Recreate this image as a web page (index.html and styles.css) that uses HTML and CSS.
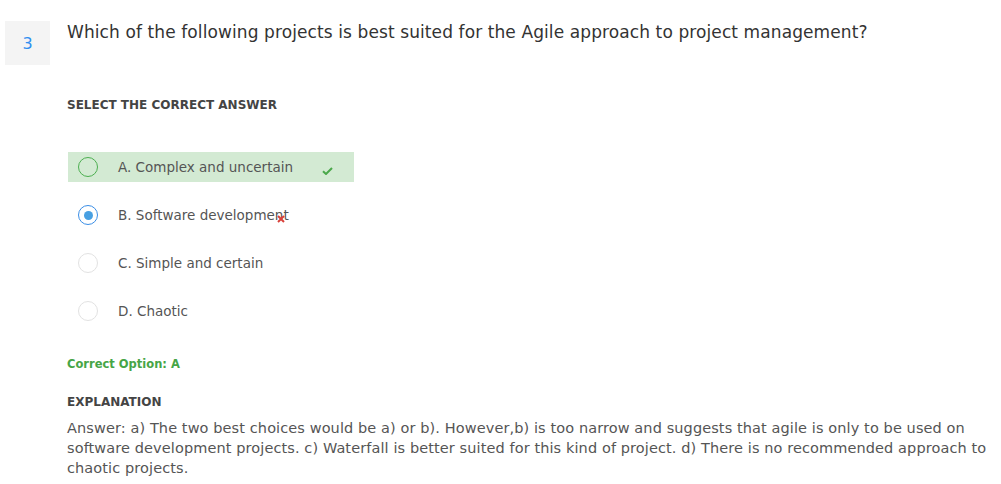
FILE: index.html
```html
<!DOCTYPE html>
<html>
<head>
<meta charset="utf-8">
<link rel="stylesheet" href="styles.css">
</head>
<body>
<div class="question">
  <div class="qnum">3</div>
  <div class="qbody">
    <div class="qtext">Which of the following projects is best suited for the Agile approach to project management?</div>
    <div class="label select">SELECT THE CORRECT ANSWER</div>
    <div class="options">
      <div class="option correct">
        <span class="radio radio-green"></span>
        <span class="otext">A. Complex and uncertain</span>
        <svg class="mark check" width="11" height="8" viewBox="0 0 11 8"><path d="M1 4.2 L4 7 L10 1" fill="none" stroke="#4aa84a" stroke-width="2"/></svg>
      </div>
      <div class="option">
        <span class="radio radio-blue"><span class="dot"></span></span>
        <span class="otext">B. Software development</span>
        <svg class="mark cross" width="8" height="8" viewBox="0 0 8 8"><path d="M1 1 L7 7 M7 1 L1 7" fill="none" stroke="#d9413a" stroke-width="2"/></svg>
      </div>
      <div class="option">
        <span class="radio"></span>
        <span class="otext">C. Simple and certain</span>
      </div>
      <div class="option">
        <span class="radio"></span>
        <span class="otext">D. Chaotic</span>
      </div>
    </div>
    <div class="correct-opt">Correct Option: A</div>
    <div class="label expl">EXPLANATION</div>
    <p class="explain">Answer: a) The two best choices would be a) or b). However,b) is too narrow and suggests that agile is only to be used on software development projects. c) Waterfall is better suited for this kind of project. d) There is no recommended approach to chaotic projects.</p>
  </div>
</div>
</body>
</html>
```

FILE: styles.css
```css
html, body {
  margin: 0;
  padding: 0;
  background: #fff;
}
body {
  font-family: "DejaVu Sans", "Liberation Sans", sans-serif;
  color: #555;
}
.question {
  display: flex;
  align-items: flex-start;
  padding: 21px 0 0 5px;
  gap: 17px;
}
.qnum {
  width: 45px;
  height: 44px;
  background: #f4f4f4;
  color: #2f8ef0;
  font-size: 16px;
  display: flex;
  align-items: center;
  justify-content: center;
  flex-shrink: 0;
}
.qbody {
  flex: 1;
  padding-right: 6px;
}
.qtext {
  font-size: 17px;
  letter-spacing: 0.1px;
  line-height: 22px;
  color: #333;
}
.label {
  font-size: 12px;
  font-weight: 700;
  color: #444;
  line-height: 16px;
}
.select {
  margin-top: 54px;
}
.options {
  margin-top: 39px;
  display: flex;
  flex-direction: column;
  gap: 18px;
}
.option {
  position: relative;
  width: 286px;
  height: 30px;
  margin-left: 1px;
  padding-left: 10px;
  box-sizing: border-box;
  display: flex;
  align-items: center;
  gap: 20px;
}
.option.correct {
  background: #d3ead3;
}
.radio {
  width: 20px;
  height: 20px;
  box-sizing: border-box;
  border: 1px solid #e2e2e2;
  border-radius: 50%;
  display: flex;
  align-items: center;
  justify-content: center;
  flex-shrink: 0;
  background: #fff;
}
.radio-green {
  border-color: #4caf50;
  background: transparent;
}
.radio-blue {
  border-color: #3a8ee6;
}
.dot {
  width: 9px;
  height: 9px;
  border-radius: 50%;
  background: #48a0e2;
}
.otext {
  font-size: 13.5px;
  color: #555;
  margin-top: -1px;
}
.mark {
  position: absolute;
}
.check {
  left: 254px;
  top: 15px;
}
.cross {
  left: 209px;
  top: 15px;
}
.correct-opt {
  margin-top: 30px;
  font-size: 11.5px;
  font-weight: 700;
  color: #46a546;
  line-height: 16px;
}
.expl {
  margin-top: 22px;
}
.explain {
  margin: 8px 0 0;
  font-size: 14.5px;
  letter-spacing: 0.1px;
  line-height: 20px;
  color: #555;
}
```
